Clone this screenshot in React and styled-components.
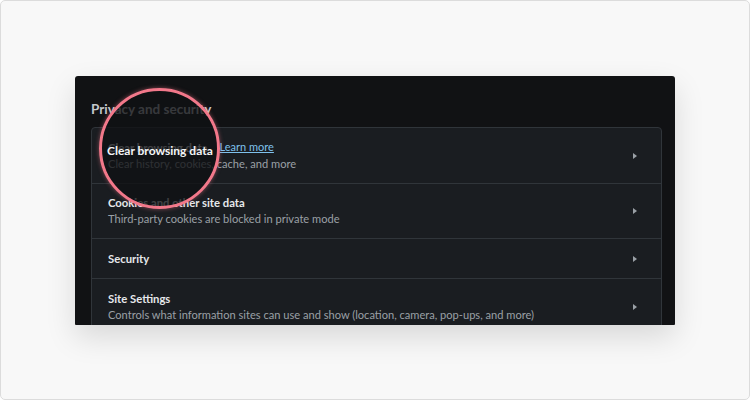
import React from "react";
import styled, { createGlobalStyle } from "styled-components";

const Global = createGlobalStyle`
  html, body { margin: 0; padding: 0; }
  body { font-family: Lato, "Liberation Sans", sans-serif; }
`;

const Frame = styled.div`
  box-sizing: border-box;
  width: 750px;
  height: 400px;
  background: #f8f8f8;
  border: 1px solid #dcdcdc;
  border-radius: 5px;
  padding-top: 75px;
  display: flex;
  justify-content: center;
  align-items: flex-start;
`;

const Panel = styled.div`
  position: relative;
  width: 600px;
  height: 249px;
  box-sizing: border-box;
  background: #111214;
  border-radius: 3px 3px 1px 1px;
  box-shadow: 0 12px 30px rgba(0, 0, 0, 0.13);
  padding: 26px 13px 0 16px;
  overflow: hidden;
`;

const Heading = styled.h2`
  margin: 0 0 11px;
  font-size: 13.5px;
  font-weight: 700;
  color: #c4c7cb;
  line-height: 14px;
`;

const Card = styled.div`
  background: #1a1d21;
  border: 1px solid #30353a;
  border-radius: 4px;
`;

const Row = styled.div`
  display: flex;
  align-items: center;
  justify-content: space-between;
  box-sizing: border-box;
  height: ${(p) => p.h}px;
  padding: 0 24px 0 16px;
  border-top: ${(p) => (p.first ? "none" : "1px solid #30353a")};
`;

const Texts = styled.div`
  display: flex;
  flex-direction: column;
  gap: 2px;
`;

const Title = styled.div`
  font-size: 11.3px;
  font-weight: 700;
  color: #e6e8eb;
  line-height: 14px;
`;

const Sub = styled.div`
  font-size: 11.1px;
  color: #9aa0a6;
  line-height: 14px;
`;

const Link = styled.a`
  margin-left: 12px;
  color: #7fc1ec;
  text-decoration: underline;
  font-size: 11px;
  font-weight: 400;
  position: relative;
  top: -1px;
`;

const Arrow = styled.span`
  width: 0;
  height: 0;
  border-top: 3.5px solid transparent;
  border-bottom: 3.5px solid transparent;
  border-left: 4px solid #9aa0a6;
`;

const Lens = styled.div`
  position: absolute;
  left: 24px;
  top: 12px;
  width: 121px;
  height: 121px;
  box-sizing: border-box;
  border-radius: 50%;
  border: 3px solid #f2788a;
  background: rgba(16, 17, 19, 0.78);
  box-shadow: 0 0 4px rgba(242, 120, 138, 0.5);
`;

const LensLabel = styled.div`
  position: absolute;
  left: 5px;
  top: 52px;
  font-size: 12px;
  font-weight: 700;
  color: #f4f5f6;
  white-space: nowrap;
`;

const rows = [
  { title: "Clear browsing data", sub: "Clear history, cookies, cache, and more", link: true, h: 55 },
  { title: "Cookies and other site data", sub: "Third-party cookies are blocked in private mode", h: 55 },
  { title: "Security", h: 40 },
  { title: "Site Settings", sub: "Controls what information sites can use and show (location, camera, pop-ups, and more)", h: 56 },
];

export default function App() {
  return (
    <>
      <Global />
      <Frame>
        <Panel>
          <Heading>Privacy and security</Heading>
          <Card>
            {rows.map((r, i) => (
              <Row key={r.title} h={r.h} first={i === 0}>
                <Texts>
                  <Title>
                    {r.title}
                    {r.link && <Link>Learn more</Link>}
                  </Title>
                  {r.sub && <Sub>{r.sub}</Sub>}
                </Texts>
                <Arrow />
              </Row>
            ))}
          </Card>
          <Lens>
            <LensLabel>Clear browsing data</LensLabel>
          </Lens>
        </Panel>
      </Frame>
    </>
  );
}
